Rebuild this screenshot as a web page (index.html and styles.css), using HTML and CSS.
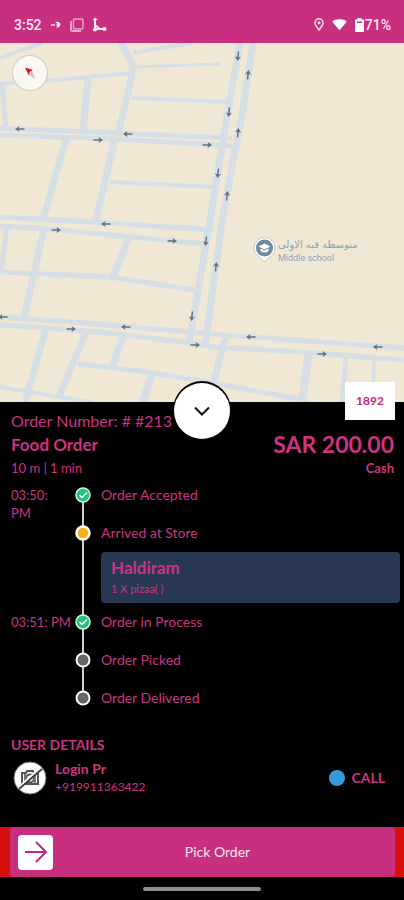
FILE: index.html
```html
<!DOCTYPE html>
<html lang="en">
<head>
<meta charset="utf-8">
<meta name="viewport" content="width=device-width, initial-scale=1">
<title>Order #213</title>
<link rel="stylesheet" href="styles.css">
</head>
<body>
<header class="status">
  <div class="status-group">
    <span class="clock">3:52</span>
    <svg class="status-arrow" viewBox="0 0 12 12" width="12" height="12" aria-hidden="true"><path d="M1 6h4" stroke="#fbe3ef" stroke-width="1.500"/><path d="M5 3q5-1 5.500 2.500Q10 8.500 6 9l1.500-2-2-1 2-1z" fill="#fbe3ef"/></svg>
    <svg class="status-cards" viewBox="0 0 14 14" width="14" height="14" aria-hidden="true"><rect x="3.500" y="1" width="9.500" height="10" rx="1.500" fill="none" stroke="#e9a3c8" stroke-width="1.500"/><path d="M1 3v8.500Q1 13 2.500 13H11" fill="none" stroke="#e9a3c8" stroke-width="2"/></svg>
    <svg viewBox="0 0 15 15" width="15" height="15" aria-hidden="true"><path d="M3 3v9h9M3 8l5 4" fill="none" stroke="#fdeaf3" stroke-width="2"/><path d="M0.500 3.500L3 0.500l3 2.500z" fill="#fdeaf3"/><circle cx="12.500" cy="12" r="2" fill="#fdeaf3"/><circle cx="3" cy="12.500" r="2" fill="#fdeaf3"/></svg>
  </div>
  <div class="status-group status-right">
    <svg class="status-pin" viewBox="0 0 10 13" width="10" height="13" aria-hidden="true"><path d="M5 12C2.500 9 1 7 1 4.800a4 4 0 0 1 8 0C9 7 7.500 9 5 12z" fill="none" stroke="#fbdcea" stroke-width="1.500"/><circle cx="5" cy="4.800" r="1.500" fill="#fbdcea"/></svg>
    <svg class="status-wifi" viewBox="0 0 16 13" width="15" height="13" aria-hidden="true"><path d="M8 12.500L0.500 3.800Q1 1 8 1t7.500 2.800z" fill="#fff"/></svg>
    <svg viewBox="0 0 9 14" width="9" height="14" aria-hidden="true"><path d="M2.500 0h4v1.500H8q1 0 1 1V13q0 1-1 1H1q-1 0-1-1V2.500q0-1 1-1h1.500z" fill="#fff"/><path d="M2 3.500h5V5H2z" fill="#c62e7c"/></svg>
    <span class="battery">71%</span>
  </div>
</header>

<main>
  <section class="map" aria-label="Map">
    <svg class="map-canvas" viewBox="0 43 404 359" preserveAspectRatio="xMidYMid slice">
      <defs>
        <g id="way"><path d="M-4.500 0H3" stroke="#65717f" stroke-width="1.500"/><path d="M5 0L0.500-3 1.500 0 0.500 3z" fill="#65717f"/></g>
      </defs>
      <rect y="43" width="404" height="359" fill="#f1e7d5"/>
      <g fill="none" stroke="#d6dfe5" stroke-linejoin="round">
        <g stroke-width="4">
          <path d="M0 58L42 43M133 53L192 43"/>
          <path stroke-width="3" d="M134 67L220 64"/>
          <path d="M131 98L230 102M110 182L215 187M0 387L60 397 90 402M374 358L373 402M0 84L47 81 130 73"/>
        </g>
        <g stroke-width="5">
          <path d="M2 84L6 130M7 227L1 273M346 358L342 402"/>
          <path d="M0 128L115 133 232 138M0 135L115 139 232 146"/>
          <path d="M0 217L110 223 214 230M0 226L50 229 120 236 206 244"/>
          <path d="M0 272L110 277 194 290"/>
          <path d="M0 317L60 321 202 333 225 335 404 348M0 325L100 332 190 343 215 347 300 352 404 360"/>
          <path d="M78 364L140 371 202 381 304 400"/>
        </g>
        <g stroke-width="7">
          <path d="M121 43L133 66 130 85 118 135M115 139L95 223M88 79L83 131M66 139L43 220M44 229L24 318"/>
          <path d="M129 238L113 277M46 328L28 392 26 402M86 332L59 397M123 336L112 368"/>
          <path d="M240 43L228 110 210 220 189 344M253 43L243 110 235 150 222 222 205 346M226 335L213 384"/>
        </g>
        <path stroke-width="8" d="M152 374L143 402M309 351L302 402"/>
      </g>
      <g fill="none">
        <g>
          <use href="#way" transform="translate(20 129) rotate(180)"/>
          <use href="#way" transform="translate(128 134) rotate(180)"/>
          <use href="#way" transform="translate(106 224) rotate(180)"/>
          <use href="#way" transform="translate(3 317) rotate(180)"/>
          <use href="#way" transform="translate(126 327) rotate(180)"/>
          <use href="#way" transform="translate(251 337) rotate(180)"/>
          <use href="#way" transform="translate(378 347) rotate(180)"/>
        </g>
        <g>
          <use href="#way" transform="translate(98 140)"/>
          <use href="#way" transform="translate(207 145)"/>
          <use href="#way" transform="translate(56 230)"/>
          <use href="#way" transform="translate(172 241)"/>
          <use href="#way" transform="translate(71 329)"/>
          <use href="#way" transform="translate(195 345)"/>
          <use href="#way" transform="translate(322 354)"/>
        </g>
        <g>
          <use href="#way" transform="translate(238 56) rotate(96)"/>
          <use href="#way" transform="translate(229 112) rotate(96)"/>
          <use href="#way" transform="translate(218 173) rotate(96)"/>
          <use href="#way" transform="translate(206 241) rotate(96)"/>
          <use href="#way" transform="translate(192 316) rotate(96)"/>
          <use href="#way" transform="translate(248 75) rotate(-84)"/>
          <use href="#way" transform="translate(238 133) rotate(-84)"/>
          <use href="#way" transform="translate(227 196) rotate(-84)"/>
          <use href="#way" transform="translate(216 267) rotate(-84)"/>
        </g>
      </g>
      <path d="M264.500 262C261 257 254 255 254 248a10.500 10.500 0 0 1 21 0C275 255 268 257 264.500 262z" fill="#fff" stroke="#c9c6c0" stroke-width="1"/>
      <circle cx="264.500" cy="248" r="8.500" fill="#6c8b9e"/>
      <path d="M258.500 246.500l6-3 6 3-6 3z" fill="#fff"/><path d="M260.500 248.500v2.500q4 3 8 0v-2.500l-4 2z" fill="#fff"/>
      <g class="place">
        <text x="278" y="248" class="place-ar">متوسطة قيه الاولى</text>
        <text x="278" y="261">Middle school</text>
      </g>
    </svg>
    <button class="compass" type="button" aria-label="Reset compass">
      <svg viewBox="0 0 34 34" width="34" height="34" aria-hidden="true"><path d="M19 14.500l3.500 8.500-8-4.500z" fill="#c9cac8"/><path d="M12 11.500l8 2.500-3 1.500-1.500 3.500z" fill="#dc1a12"/></svg>
    </button>
  </section>

  <section class="sheet">
    <button class="toggle" type="button" aria-label="Collapse order">
      <svg viewBox="0 0 18 12" width="18" height="12" aria-hidden="true"><path d="M2 2.500l7 7 7-7" fill="none" stroke="#111" stroke-width="2"/></svg>
    </button>
    <span class="code">1892</span>

    <p class="number">Order Number: # #213</p>
    <div class="summary">
      <div>
        <h1 class="kind">Food Order</h1>
        <p class="small">10 m | 1 min</p>
      </div>
      <div class="pay">
        <p class="amount">SAR 200.00</p>
        <p class="small method">Cash</p>
      </div>
    </div>

    <ol class="timeline">
      <li class="step">
        <span class="time">03:50:<br>PM</span>
        <span class="dot"><svg viewBox="0 0 16 16" width="16" height="16" aria-hidden="true"><circle cx="8" cy="8" r="7" fill="#1fc47d" stroke="#d9f5e8" stroke-width="1.500"/><path d="M4.500 8l2.500 2.500 5-5" fill="none" stroke="#fff" stroke-width="1.500"/></svg></span>
        <span>Order Accepted</span>
      </li>
      <li class="step">
        <span class="time"></span>
        <span class="dot"><svg viewBox="0 0 16 16" width="16" height="16" aria-hidden="true"><circle cx="8" cy="8" r="6.500" fill="#fbb012" stroke="#fff" stroke-width="2.500"/></svg></span>
        <div>
          <span>Arrived at Store</span>
          <article class="store">
            <h2 class="store-name">Haldiram</h2>
            <p class="store-item">1 X pizaa( )</p>
          </article>
        </div>
      </li>
      <li class="step">
        <span class="time">03:51: PM</span>
        <span class="dot"><svg viewBox="0 0 16 16" width="16" height="16" aria-hidden="true"><circle cx="8" cy="8" r="7" fill="#1fc47d" stroke="#d9f5e8" stroke-width="1.500"/><path d="M4.500 8l2.500 2.500 5-5" fill="none" stroke="#fff" stroke-width="1.500"/></svg></span>
        <span>Order in Process</span>
      </li>
      <li class="step">
        <span class="time"></span>
        <span class="dot"><svg viewBox="0 0 16 16" width="16" height="16" aria-hidden="true"><circle cx="8" cy="8" r="6.500" fill="#666" stroke="#fff" stroke-width="2"/></svg></span>
        <span>Order Picked</span>
      </li>
      <li class="step">
        <span class="time"></span>
        <span class="dot"><svg viewBox="0 0 16 16" width="16" height="16" aria-hidden="true"><circle cx="8" cy="8" r="6.500" fill="#666" stroke="#fff" stroke-width="2"/></svg></span>
        <span>Order Delivered</span>
      </li>
    </ol>

    <h2 class="heading">USER DETAILS</h2>
    <div class="user">
      <svg viewBox="0 0 34 34" width="34" height="34" aria-hidden="true"><circle cx="17" cy="17" r="16" fill="#fff" stroke="#777" stroke-width="1"/><path d="M9 12v11h16V12h-4l-1-2h-6l-1 2z" fill="none" stroke="#555" stroke-width="2"/><circle cx="17" cy="17.500" r="4" fill="none" stroke="#555" stroke-width="2"/><path d="M12 13v9M22 14v8" stroke="#777" stroke-width="2"/><path d="M5 27L27 7" stroke="#fff" stroke-width="2"/><path d="M6 28L29 8" stroke="#444" stroke-width="2"/></svg>
      <div class="user-text">
        <p class="user-name">Login Pr</p>
        <p class="user-phone">+919911363422</p>
      </div>
      <a class="call" href="tel:+919911363422"><span class="call-dot"></span>CALL</a>
    </div>
  </section>
</main>

<footer>
  <div class="action">
    <button class="pick" type="button">
      <span class="pick-icon"><svg viewBox="0 0 24 24" width="24" height="24" aria-hidden="true"><path d="M1 12h21M12 2l10 10-10 10" fill="none" stroke="#c3267a" stroke-width="2"/></svg></span>
      <span class="pick-label">Pick Order</span>
    </button>
  </div>
  <div class="nav"><span class="nav-bar"></span></div>
</footer>
</body>
</html>
```

FILE: styles.css
```css
* {
  box-sizing: border-box;
}

body {
  margin: 0;
  min-height: 100vh;
  display: flex;
  flex-direction: column;
  background: #000;
  color: #cc3382;
  font-family: Lato, "Noto Sans", sans-serif;
  font-size: 14px;
  line-height: 18px;
}

h1, h2, p, ol {
  margin: 0;
  padding: 0;
}

button {
  border: 0;
  padding: 0;
  font: inherit;
  cursor: pointer;
}

svg {
  display: block;
}

main {
  flex: 1;
}

.status {
  display: flex;
  justify-content: space-between;
  align-items: center;
  height: 43px;
  padding: 6px 13px 0 14px;
  background: #c8307f;
  color: #fdeaf3;
  font-family: Roboto, sans-serif;
  font-size: 14px;
  font-weight: 500;
}

.status-group {
  display: flex;
  align-items: center;
  gap: 8px;
}

.battery {
  margin-left: -7px;
}

.map {
  position: relative;
}

.map-canvas {
  width: 100%;
  height: auto;
}

.place {
  fill: #8ba3b5;
  font-family: Roboto, sans-serif;
  font-size: 9px;
}

.place-ar {
  font-family: "DejaVu Sans", sans-serif;
  font-size: 10px;
}

.compass {
  position: absolute;
  top: 13px;
  left: 13px;
  width: 34px;
  height: 34px;
  border-radius: 50%;
  background: #faf8f3;
  box-shadow: 0 0 0 1px #d3cdc0;
}

.sheet {
  position: relative;
  padding: 9px 10px 24px 11px;
}

.toggle {
  position: absolute;
  top: -19px;
  left: 50%;
  display: grid;
  place-items: center;
  width: 56px;
  height: 56px;
  margin-left: -28px;
  border-radius: 50%;
  background: #fff;
  box-shadow: 0 -1px 0 1px #000;
}

.code {
  position: absolute;
  top: -20px;
  right: 9px;
  width: 50px;
  background: #fff;
  color: #c3267a;
  font-size: 12px;
  font-weight: 700;
  line-height: 38px;
  text-align: center;
}

.number {
  font-size: 16px;
  line-height: 20px;
}

.summary {
  display: flex;
  justify-content: space-between;
}

.kind {
  font-size: 17px;
  font-weight: 700;
  line-height: 27px;
}

.small {
  font-size: 13px;
  line-height: 20px;
}

.pay {
  text-align: right;
}

.amount {
  font-size: 23px;
  font-weight: 700;
  line-height: 27px;
}

.method {
  font-weight: 700;
}

.timeline {
  margin-top: 8px;
  list-style: none;
}

.step {
  position: relative;
  display: grid;
  grid-template-columns: 60px 22px 1fr;
  column-gap: 4px;
  min-height: 38px;
  margin-right: -6px;
}

.step:not(:last-child)::before {
  content: "";
  position: absolute;
  top: 10px;
  bottom: -8px;
  left: 71px;
  width: 2px;
  background: #d0d0d0;
}

.time {
  font-size: 13px;
  white-space: nowrap;
}

.dot {
  position: relative;
  height: 18px;
  padding-top: 1px;
}

.store {
  margin: 10px 0;
  padding: 6px 10px;
  border-radius: 4px;
  background: #283852;
}

.store-name {
  font-size: 17px;
  font-weight: 700;
  line-height: 19px;
}

.store-item {
  margin-top: 4px;
  font-size: 11px;
  line-height: 16px;
}

.heading {
  margin-top: 9px;
  font-size: 14px;
  font-weight: 700;
}

.user {
  display: flex;
  align-items: center;
  gap: 8px;
  margin-top: 6px;
  padding: 0 9px 0 2px;
}

.user-text {
  flex: 1;
}

.user-name {
  font-weight: 700;
}

.user-phone {
  font-size: 12px;
}

.call {
  display: flex;
  align-items: center;
  gap: 6px;
  color: inherit;
  font-weight: 700;
  text-decoration: none;
}

.call-dot {
  width: 16px;
  height: 16px;
  border-radius: 50%;
  background: #349bdc;
}

.action {
  padding: 0 9px 0 10px;
  background: #d70f0d;
}

.pick {
  display: flex;
  align-items: center;
  width: 100%;
  height: 50px;
  padding: 0 13px 0 8px;
  border-radius: 4px;
  background: #c8307f;
  color: #fde6f1;
}

.pick-icon {
  display: grid;
  place-items: center;
  width: 35px;
  height: 35px;
  border-radius: 4px;
  background: #fff;
}

.pick-label {
  flex: 1;
}

.nav {
  display: flex;
  justify-content: center;
  padding: 10px 0 9px;
}

.nav-bar {
  width: 118px;
  height: 4px;
  border-radius: 2px;
  background: #8f8f8f;
}
```
